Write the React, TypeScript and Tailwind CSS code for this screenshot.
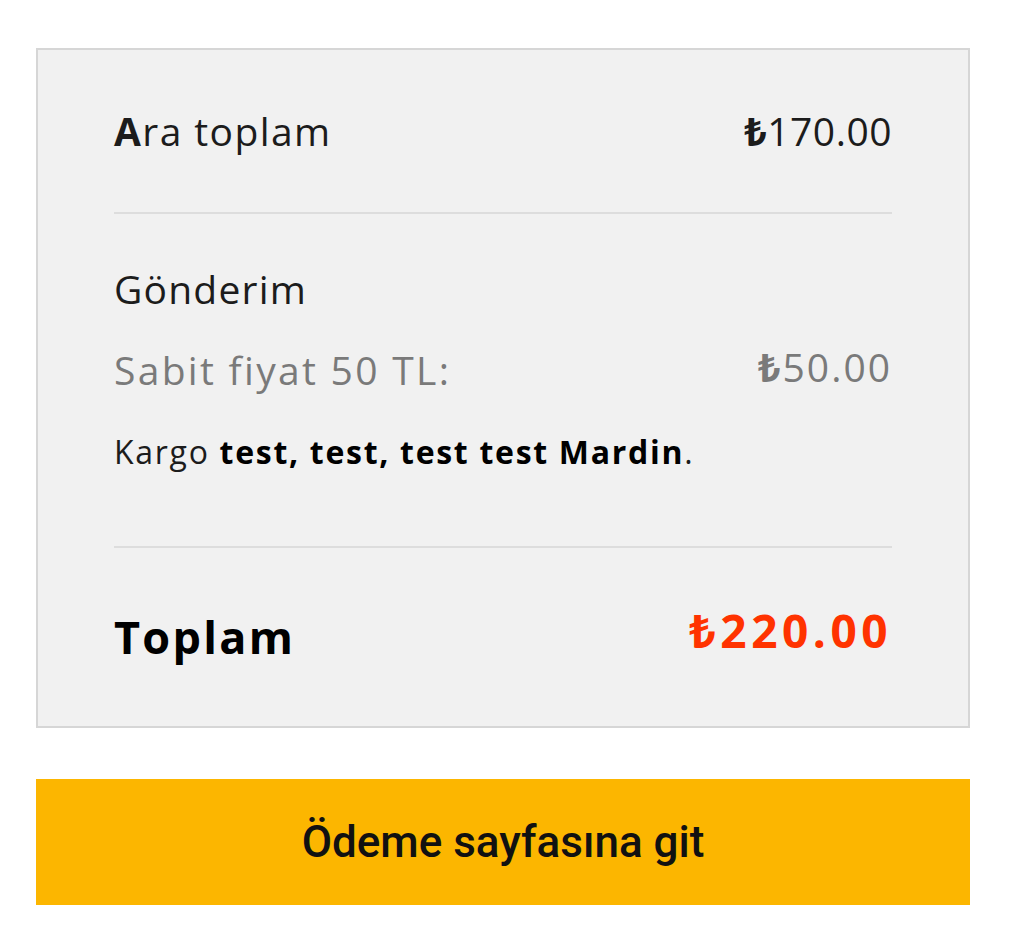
import React from 'react';

const sans = { fontFamily: '"Open Sans", "Noto Sans", sans-serif' };

const Price = ({ value, className = '' }: { value: string; className?: string }) => (
  <span className={className}>
    <span className="font-bold">₺</span>
    {value}
  </span>
);

const App = () => {
  return (
    <div className="min-h-[936px] w-[1024px] bg-white pt-[48px] pl-[36px]" style={sans}>
      <div className="w-[934px] border-2 border-[#d6d6d6] bg-[#f1f1f1] px-[76px]">
        <div className="flex h-[164px] items-center justify-between border-b-2 border-[#dddddd] text-[39px] text-[#1c1c1c]">
          <span className="tracking-[1.4px]">
            <span className="font-bold">A</span>ra toplam
          </span>
          <Price value="170.00" className="tracking-[0.5px]" />
        </div>

        <div className="border-b-2 border-[#dddddd] pt-[50px] pb-[69px]">
          <div className="text-[39px] leading-[50px] tracking-[1.2px] text-[#1c1c1c]">Gönderim</div>
          <div className="mt-[31px] flex justify-between text-[39px] leading-[50px] text-[#7a7a7a]">
            <span className="tracking-[2.3px]">Sabit fiyat 50 TL:</span>
            <Price value="50.00" className="-mt-[3px] tracking-[2px]" />
          </div>
          <div className="mt-[32px] text-[32px] leading-[50px] tracking-[1.7px] text-[#1c1c1c]">
            Kargo <strong className="font-bold text-black">test, test, test test Mardin</strong>.
          </div>
        </div>

        <div className="flex h-[178px] items-center justify-between">
          <span className="text-[45px] font-bold tracking-[2.3px] text-black">Toplam</span>
          <span className="mb-[14px] text-[46px] font-bold tracking-[4.5px] text-[#ff3300]">₺220.00</span>
        </div>
      </div>

      <button
        className="mt-[51px] flex h-[126px] w-[934px] items-center justify-center bg-[#fcb600] text-[44px] font-medium text-[#111111]"
        style={{ fontFamily: 'Roboto, "Open Sans", sans-serif' }}
      >
        Ödeme sayfasına git
      </button>
    </div>
  );
};

export default App;
